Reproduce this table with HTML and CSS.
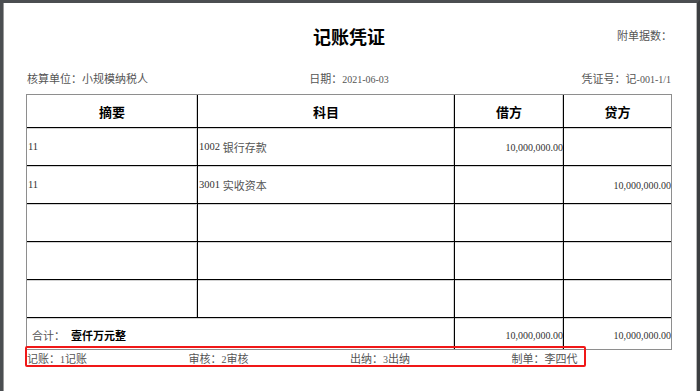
FILE: index.html
```html
<!DOCTYPE html>
<html lang="zh-CN">
<head>
<meta charset="utf-8">
<title>记账凭证</title>
<link rel="stylesheet" href="styles.css">
</head>
<body>
<div class="page">
  <header class="head">
    <div class="head-side"></div>
    <h1 class="title">记账凭证</h1>
    <div class="attach">附单据数：</div>
  </header>
  <div class="info">
    <div class="info-left">核算单位：小规模纳税人</div>
    <div class="info-mid">日期：<span class="num">2021-06-03</span></div>
    <div class="info-right">凭证号：记<span class="num">-001-1/1</span></div>
  </div>
  <div class="voucher">
    <div class="cell th">摘要</div>
    <div class="cell th">科目</div>
    <div class="cell th">借方</div>
    <div class="cell th last">贷方</div>

    <div class="cell txt"><span class="num dark">11</span></div>
    <div class="cell txt"><span class="num dark">1002</span>&nbsp;银行存款</div>
    <div class="cell amt"><span class="num">10,000,000.00</span></div>
    <div class="cell amt last"></div>

    <div class="cell txt"><span class="num dark">11</span></div>
    <div class="cell txt"><span class="num dark">3001</span>&nbsp;实收资本</div>
    <div class="cell amt"></div>
    <div class="cell amt last"><span class="num">10,000,000.00</span></div>

    <div class="cell"></div>
    <div class="cell"></div>
    <div class="cell"></div>
    <div class="cell last"></div>

    <div class="cell"></div>
    <div class="cell"></div>
    <div class="cell"></div>
    <div class="cell last"></div>

    <div class="cell"></div>
    <div class="cell"></div>
    <div class="cell"></div>
    <div class="cell last"></div>

    <div class="cell total span2"><span class="total-label">合计：</span><strong class="total-words">壹仟万元整</strong></div>
    <div class="cell amt total"><span class="num">10,000,000.00</span></div>
    <div class="cell amt total last"><span class="num">10,000,000.00</span></div>
  </div>
  <div class="signs">
    <div class="sign">记账：<span class="num">1</span>记账</div>
    <div class="sign">审核：<span class="num">2</span>审核</div>
    <div class="sign">出纳：<span class="num">3</span>出纳</div>
    <div class="sign">制单：李四代</div>
  </div>
  <div class="mark"></div>
</div>
</body>
</html>
```

FILE: styles.css
```css
html, body {
  margin: 0;
  padding: 0;
  background: #ffffff;
}

body {
  font-family: "Liberation Serif", "Noto Sans CJK SC", serif;
  font-size: 11px;
  color: #555555;
}

.page {
  position: relative;
  width: 700px;
  height: 391px;
  box-sizing: border-box;
  border-top: 3px solid #4b4e51;
  border-left: 3px solid #4b4e51;
  border-right: 3px solid #3b3e41;
  box-shadow: inset -1px 0 0 #b8b8b8, inset 1px 0 0 #9a9a9a;
  padding: 0 25px 0 23px;
  background: #ffffff;
  overflow: hidden;
}

.num {
  font-family: "Liberation Serif", serif;
  font-size: 10px;
}

.num.dark {
  font-size: 10.5px;
  color: #333333;
}

.head {
  display: grid;
  grid-template-columns: 1fr auto 1fr;
  align-items: center;
  margin-top: 21px;
  height: 24px;
}

.title {
  margin: 0;
  font-family: "Noto Sans CJK SC", sans-serif;
  font-size: 18px;
  line-height: 24px;
  font-weight: 700;
  color: #000000;
}

.attach {
  justify-self: end;
  padding-right: 0;
  line-height: 24px;
}

.info {
  display: grid;
  grid-template-columns: 1fr auto 1fr;
  margin-top: 23px;
  line-height: 16px;
  height: 16px;
}

.info-left {
  padding-left: 1px;
}

.info-right {
  justify-self: end;
  padding-right: 1px;
}

.voucher {
  margin-top: 7px;
  display: grid;
  grid-template-columns: 171px 257px 109px 1fr;
  grid-template-rows: 33px repeat(5, 38px) 31px;
  border: 1px solid #8e8e8e;
}

.cell {
  box-sizing: border-box;
  border-right: 1px solid #000000;
  border-bottom: 1px solid #000000;
  box-shadow: inset 0 1px 0 #d2d2d2, inset -1px 0 0 #d2d2d2;
  display: flex;
  align-items: center;
  min-width: 0;
  white-space: nowrap;
}

.cell.last {
  border-right: 0;
  box-shadow: inset 0 1px 0 #d2d2d2;
}

.th {
  justify-content: center;
  font-family: "Noto Sans CJK SC", sans-serif;
  font-weight: 700;
  font-size: 13px;
  color: #000000;
  padding-top: 1px;
  box-shadow: inset -1px 0 0 #d2d2d2;
}

.th.last {
  box-shadow: none;
}

.txt {
  padding-left: 1px;
}

.amt {
  justify-content: flex-end;
  color: #333333;
  padding-top: 1px;
}

.total {
  border-bottom: 0;
  padding-top: 3px;
}

.span2 {
  grid-column: span 2;
  padding-left: 5px;
}

.total-label {
  color: #555555;
}

.total-words {
  margin-left: 6px;
  font-family: "Noto Sans CJK SC", sans-serif;
  font-weight: 700;
  color: #000000;
}

.signs {
  display: grid;
  grid-template-columns: repeat(4, 1fr);
  margin-top: 0;
  line-height: 16px;
  padding-top: 1px;
}

.sign {
  padding-left: 1px;
  white-space: nowrap;
}

.mark {
  position: absolute;
  left: 22px;
  top: 343px;
  width: 561px;
  height: 21px;
  box-sizing: border-box;
  border: 2px solid #f01818;
  border-radius: 2px;
  pointer-events: none;
}
```
